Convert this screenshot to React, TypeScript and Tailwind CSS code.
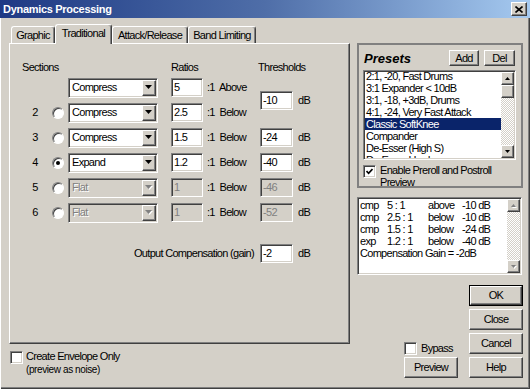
import React from "react";

const raised =
  "border border-t-white border-l-white border-r-[#404040] border-b-[#404040] shadow-[inset_-1px_-1px_0_#808080]";
const sunken =
  "border border-t-[#808080] border-l-[#808080] border-r-white border-b-white shadow-[inset_1px_1px_0_#404040,inset_-1px_-1px_0_#d4d0c8]";
const checker =
  "bg-[image:repeating-conic-gradient(#fff_0_25%,#d4d0c8_0_50%)] bg-size-[2px_2px]";

const Tri = ({ up = false, small = false, off = false }: { up?: boolean; small?: boolean; off?: boolean }) => {
  const w = small ? 5 : 7;
  const h = small ? 3 : 4;
  const pts = up ? `0,${h} ${w},${h} ${w / 2},0` : `0,0 ${w},0 ${w / 2},${h}`;
  return (
    <svg width={w + 1} height={h + 1} viewBox={`0 0 ${w + 1} ${h + 1}`}>
      {off && <polygon points={pts} fill="#fff" transform="translate(1,1)" />}
      <polygon points={pts} fill={off ? "#808080" : "#000"} />
    </svg>
  );
};

const Btn = ({ children, className = "", def = false }: { children: React.ReactNode; className?: string; def?: boolean }) =>
  def ? (
    <div className={`border border-black ${className}`}>
      <div className={`${raised} bg-[#d4d0c8] h-full flex items-center justify-center`}>{children}</div>
    </div>
  ) : (
    <div className={`${raised} bg-[#d4d0c8] flex items-center justify-center ${className}`}>{children}</div>
  );

const Check = ({ checked = false }: { checked?: boolean }) => (
  <div className={`${sunken} bg-white w-[13px] h-[13px] shrink-0 flex items-center justify-center`}>
    {checked && (
      <svg width="7" height="7" viewBox="0 0 7 7">
        <path d="M0.5 3 L2.6 5.3 L6.5 1" fill="none" stroke="#000" strokeWidth="1.7" />
      </svg>
    )}
  </div>
);

const Radio = ({ checked = false }: { checked?: boolean }) => (
  <div className="w-[12px] h-[12px] rounded-full bg-white border border-t-[#808080] border-l-[#808080] border-r-white border-b-white shadow-[inset_1px_1px_0_#404040] flex items-center justify-center">
    {checked && <div className="w-[4px] h-[4px] rounded-full bg-black" />}
  </div>
);

const Combo = ({ value, off = false }: { value: string; off?: boolean }) => (
  <div className={`${sunken} h-[20px] w-[90px] flex items-center ${off ? "bg-[#d4d0c8]" : "bg-white"}`}>
    <span className={`flex-1 pl-[3px] ${off ? "text-[#808080] [text-shadow:1px_1px_0_#fff]" : ""}`}>{value}</span>
    <div className={`${raised} bg-[#d4d0c8] w-[14px] h-[16px] mr-px flex items-center justify-center`}>
      <Tri off={off} />
    </div>
  </div>
);

const Field = ({ value, off = false }: { value: string; off?: boolean }) => (
  <div className={`${sunken} h-[19px] flex items-center pl-[2px] ${off ? "bg-[#d4d0c8] text-[#808080]" : "bg-white"}`}>
    {value}
  </div>
);

const Scroll = ({ thumb = false, off = false }: { thumb?: boolean; off?: boolean }) => (
  <div className="w-[13px] flex flex-col">
    <div className={`${raised} bg-[#d4d0c8] h-[13px] flex items-center justify-center`}>
      <Tri up small off={off} />
    </div>
    {thumb && <div className={`${raised} bg-[#d4d0c8] h-[13px]`} />}
    <div className={`flex-1 ${checker}`} />
    <div className={`${raised} bg-[#d4d0c8] h-[13px] flex items-center justify-center`}>
      <Tri small off={off} />
    </div>
  </div>
);

const Tab = ({ label, w, active = false }: { label: string; w: string; active?: boolean }) => (
  <div
    className={`${w} ${active ? "h-[20px] pb-[2px]" : "h-[17px] mb-px"} bg-[#d4d0c8] rounded-t-[3px] border-t border-l border-r border-t-white border-l-white border-r-[#404040] shadow-[inset_-1px_0_0_#808080] flex items-center justify-center`}
  >
    {label}
  </div>
);

const sections = [
  { n: "", mode: "Compress", ratio: "5", dir: "Above", thr: "-10" },
  { n: "2", mode: "Compress", ratio: "2.5", dir: "Below" },
  { n: "3", mode: "Compress", ratio: "1.5", dir: "Below", thr: "-24" },
  { n: "4", mode: "Expand", ratio: "1.2", dir: "Below", thr: "-40", on: true },
  { n: "5", mode: "Flat", ratio: "1", dir: "Below", thr: "-46", off: true },
  { n: "6", mode: "Flat", ratio: "1", dir: "Below", thr: "-52", off: true },
];

const presets = [
  "2:1, -20, Fast Drums",
  "3:1 Expander < 10dB",
  "3:1, -18, +3dB, Drums",
  "4:1, -24, Very Fast Attack",
  "Classic SoftKnee",
  "Compander",
  "De-Esser (High S)",
  "De-Esser Hard",
];

const summary = [
  ["cmp", "5 : 1", "above", "-10 dB"],
  ["cmp", "2.5 : 1", "below", "-10 dB"],
  ["cmp", "1.5 : 1", "below", "-24 dB"],
  ["exp", "1.2 : 1", "below", "-40 dB"],
];

export default function App() {
  return (
    <div className="w-[530px] h-[389px] overflow-hidden bg-[#d4d0c8] flex flex-col font-['Liberation_Sans',Arial,sans-serif] text-[11px] leading-[13px] tracking-[-0.7px] text-black select-none shadow-[inset_1px_0_0_#fff,inset_-1px_-1px_0_#404040,inset_-2px_-2px_0_#808080]">
      {/* title bar */}
      <div className="h-[18px] shrink-0 flex items-center justify-between pl-[3px] pr-[3px] bg-linear-to-r from-[#1f3984] via-[#4f6ea8] to-[#a6caf0]">
        <span className="text-white font-bold tracking-[-0.3px]">Dynamics Processing</span>
        <div className={`${raised} bg-[#d4d0c8] w-[16px] h-[14px] flex items-center justify-center`}>
          <svg width="8" height="7" viewBox="0 0 8 7">
            <path d="M0.5 0.5 L7.5 6.5 M7.5 0.5 L0.5 6.5" stroke="#000" strokeWidth="1.6" />
          </svg>
        </div>
      </div>

      <div className="flex pl-[9px] pt-[6px]">
        {/* left side */}
        <div className="w-[341px] flex flex-col">
          <div className="relative z-10 flex items-end h-[20px] -mb-px pl-[2px]">
            <Tab label="Graphic" w="w-[44px]" />
            <Tab label="Traditional" w="w-[57px]" active />
            <Tab label="Attack/Release" w="w-[76px]" />
            <Tab label="Band Limiting" w="w-[68px]" />
          </div>
          <div className="h-[301px] border border-t-white border-l-white border-r-[#404040] border-b-[#404040] shadow-[inset_-1px_-1px_0_#808080] pt-[17px]">
            <div className="flex ml-[12px] h-[13px]">
              <div className="w-[149px]">Sections</div>
              <div className="w-[87px]">Ratios</div>
              <div>Thresholds</div>
            </div>
            <div className="ml-[19px] mt-px grid grid-cols-[12px_27px_90px_45px_57px_33px_auto] auto-rows-[25px] items-center">
              {sections.map((s, i) => (
                <React.Fragment key={i}>
                  <div className="text-center">{s.n}</div>
                  <div className="pl-[11px]">{s.n && <Radio checked={s.on} />}</div>
                  <Combo value={s.mode} off={s.off} />
                  <div className="flex justify-end">
                    <div className="w-[32px]">
                      <Field value={s.ratio} off={s.off} />
                    </div>
                  </div>
                  <div className="pl-[4px]">:1&nbsp; {s.dir}</div>
                  {i !== 1 && (
                    <>
                      <div className={i === 0 ? "row-span-2" : ""}>
                        <Field value={s.thr!} off={s.off} />
                      </div>
                      <div className={`pl-[5px] ${i === 0 ? "row-span-2" : ""}`}>dB</div>
                    </>
                  )}
                </React.Fragment>
              ))}
            </div>
            <div className="ml-[19px] mt-[19px] flex items-center">
              <div className="w-[231px] text-right pr-[6px]">Output Compensation (gain)</div>
              <div className="w-[33px]">
                <Field value="-2" />
              </div>
              <span className="pl-[5px]">dB</span>
            </div>
          </div>
          <div className="mt-[7px] ml-px flex items-start">
            <Check />
            <div className="ml-[3px] -mt-px">
              <div>Create Envelope Only</div>
              <div className="text-[10px] tracking-[-0.4px]">(preview as noise)</div>
            </div>
          </div>
        </div>

        {/* right side */}
        <div className="ml-[7px] w-[166px] mt-[19px] flex flex-col">
          <div className="h-[145px] border-2 border-[#808080] flex flex-col">
            <div className="flex items-center mt-[5px] h-[16px] pl-[5px] pr-[6px]">
              <span className="flex-1 font-bold italic text-[13px] tracking-[0px]">Presets</span>
              <Btn className="w-[30px] h-[16px]">Add</Btn>
              <Btn className="ml-[5px] w-[31px] h-[16px]">Del</Btn>
            </div>
            <div className={`${sunken} bg-white ml-[4px] mt-[4px] w-[153px] h-[90px] p-px flex`}>
              <div className="flex-1 overflow-hidden">
                <div className="-mt-[2px]">
                  {presets.map((p) => (
                    <div
                      key={p}
                      className={`h-[12px] leading-[12px] pl-px whitespace-nowrap ${p === "Classic SoftKnee" ? "bg-[#0a246a] text-white" : ""}`}
                    >
                      {p}
                    </div>
                  ))}
                </div>
              </div>
              <Scroll thumb />
            </div>
            <div className="ml-[4px] mt-[5px] flex items-start">
              <Check checked />
              <div className="ml-[4px] -mt-px w-[135px] leading-[12px]">Enable Preroll and Postroll Preview</div>
            </div>
          </div>

          <div className={`${sunken} bg-white mt-[9px] w-[165px] h-[78px] p-px flex`}>
            <div className="flex-1 pl-px leading-[12px] whitespace-nowrap">
              {summary.map((r, i) => (
                <div key={i} className="grid grid-cols-[27px_41px_34px_auto]">
                  {r.map((c, j) => (
                    <span key={j}>{c}</span>
                  ))}
                </div>
              ))}
              <div>Compensation Gain = -2dB</div>
            </div>
            <Scroll off />
          </div>

          <div className="mt-[10px] flex">
            <div className="ml-[47px] w-[54px] flex flex-col justify-end">
              <div className="flex items-center mb-[2px]">
                <Check />
                <span className="ml-[4px]">Bypass</span>
              </div>
              <Btn className="h-[21px]">Preview</Btn>
            </div>
            <div className="ml-[11px] w-[54px] flex flex-col gap-[3px]">
              <Btn def className="h-[21px]">OK</Btn>
              <Btn className="h-[21px]">Close</Btn>
              <Btn className="h-[21px]">Cancel</Btn>
              <Btn className="h-[21px]">Help</Btn>
            </div>
          </div>
        </div>
      </div>
    </div>
  );
}
